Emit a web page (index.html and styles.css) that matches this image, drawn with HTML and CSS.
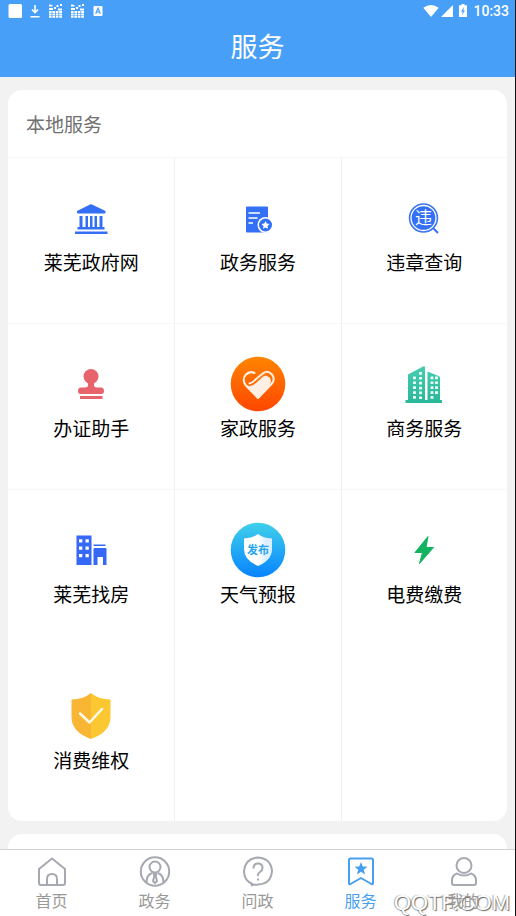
FILE: index.html
```html
<!DOCTYPE html>
<html lang="zh-CN">
<head>
<meta charset="utf-8">
<meta name="viewport" content="width=device-width, initial-scale=1">
<title>服务</title>
<link rel="stylesheet" href="styles.css">
</head>
<body>
<div class="app">
  <header class="header">
    <div class="status">
      <div class="status-group status-left">
        <svg width="14" height="16" viewBox="0 0 14 16"><rect x="0.5" y="1" width="13.5" height="14" rx="1.5" fill="#fff"/></svg>
        <svg width="10" height="16" viewBox="0 0 10 16"><path d="M5 2v7M2 6.500L5 9.500l3-3M0.500 13.800h9" fill="none" stroke="#fff" stroke-width="1.600"/></svg>
        <svg width="14" height="16" viewBox="0 0 14 16"><path id="px" d="M1 1.500h2v2H1zM6 4h2v2H6zM8.500 2h2v2h-2zM12 1h2v2h-2zM1 5h4v2H1zM10 5.500h4v2h-4zM1 8h2.600v2H1zM4.400 8H7v2H4.400zM7.800 8h2.600v2H7.800zM11.200 8H14v2h-2.800zM1 10.600h2.600v1.800H1zM4.400 10.600H7v1.800H4.400zM7.800 10.600h2.600v1.800H7.800zM11.200 10.600H14v1.800h-2.800zM1 13h2.600v1.800H1zM4.400 13H7v1.800H4.400zM7.800 13h2.600v1.800H7.800zM11.200 13H14v1.800h-2.800zM3 2h1.500v1.500H3z" fill="#fff"/></svg>
        <svg width="14" height="16" viewBox="0 0 14 16"><use href="#px"/></svg>
        <svg width="10" height="16" viewBox="0 0 10 16"><rect x="0.500" y="3" width="9" height="10" rx="1" fill="#fff"/><path d="M2.700 10.700L5 5l2.300 5.700M3.500 9h3" fill="none" stroke="#479ff7" stroke-width="1.200"/></svg>
      </div>
      <div class="status-group status-right">
        <svg width="16" height="16" viewBox="0 0 16 16"><path d="M0.300 4.800Q8 -0.600 15.700 4.800L8 14z" fill="#fff"/></svg>
        <svg width="12" height="16" viewBox="0 0 12 16"><path d="M12 2v12H0z" fill="#fff"/></svg>
        <svg class="battery" width="8" height="16" viewBox="0 0 8 16"><path d="M2.500 1h3v1.300H8V14H0V2.300h2.500z" fill="#fff"/><path d="M5 4L2 8.500h1.700L3 12l3-4.400H4.400z" fill="#479ff7"/></svg>
        <span class="time">10:33</span>
      </div>
    </div>
    <h1 class="title">服务</h1>
  </header>

  <main class="content">
    <section class="card">
      <h2 class="card-title">本地服务</h2>
      <div class="grid">
        <a class="cell" href="#">
          <svg class="icon" viewBox="0 0 56 56" fill="#3370f5"><path d="M14 21L27 14.500q1-.5 2 0L42.500 21v1.500q0 1-1 1h-26.500q-1 0-1-1zM16.500 26h3v11h3V26h2.500v11h2V26h2.500v11h2V26H34v11h2.500V26h3v11h2v2.500h-27V37h2zM12 41.500h32.500V44H12z"/></svg>
          <span class="label">莱芜政府网</span>
        </a>
        <a class="cell" href="#">
          <svg class="icon" viewBox="0 0 56 56"><path d="M16 17.500q0-1 1-1h20q1 0 1 1V42.500H17q-1 0-1-1z" fill="#3370f5"/><path d="M18.500 23h11.500M18.500 28h9M18.500 33h4.500" stroke="#fff" stroke-width="1.700"/><circle cx="35.500" cy="35" r="8" fill="#fff"/><circle cx="35.500" cy="35" r="6.500" fill="#3370f5"/><path d="M35.500 31l1.200 2.500 2.800.4-2 2 .5 2.800-2.500-1.300-2.500 1.300.5-2.800-2-2 2.800-.4z" fill="#fff"/></svg>
          <span class="label">政务服务</span>
        </a>
        <a class="cell" href="#">
          <svg class="icon" viewBox="0 0 56 56"><circle cx="27.500" cy="28" r="14" fill="#3370f5" stroke="#3b76ef" stroke-width="1.500"/><circle cx="27.500" cy="28" r="12.500" fill="none" stroke="#fff" stroke-width="1.300"/><path d="M37.500 38.500l4.500 4.500" stroke="#3370f5" stroke-width="2"/><text class="glyph" x="27.500" y="34" font-size="17" fill="#fff">违</text></svg>
          <span class="label">违章查询</span>
        </a>
        <a class="cell" href="#">
          <svg class="icon" viewBox="0 0 56 56" fill="#e7646c"><circle cx="28" cy="20.500" r="7.500"/><path d="M25 25h6v4q0 2.500 3 2.500h4q3 0 3 3.500 0 3-2.500 3h-21Q15 38 15 35q0-3.500 3-3.500h4q3 0 3-2.500z"/><path d="M17 40h22.500v3H17z"/></svg>
          <span class="label">办证助手</span>
        </a>
        <a class="cell" href="#">
          <svg class="icon" viewBox="0 0 56 56"><defs><linearGradient id="orange" x2="0" y2="1"><stop stop-color="#ff8500"/><stop offset="1" stop-color="#ff4600"/></linearGradient></defs><circle cx="28" cy="28" r="27.300" fill="url(#orange)"/><path d="M28 42.500L14.500 29q7 2 11-3l6-6q3-2.500 6.500-.5 4.500 3.500 2 9.500z" fill="#fff0e3"/><path d="M19.500 27.500q3.500-1 5.500-3.500l7-6q5-4.500 9.500 0 4.500 5 0 10L28 42 15.500 29q-3.500-5.500 0-10 4-4.500 9-2" fill="none" stroke="#fff0e3" stroke-width="2" stroke-linecap="round" stroke-linejoin="round"/><path d="M19 29.500q4-.5 7-3.500l6-5.500q4-3 7 0" fill="none" stroke="#ff6a00" stroke-width="1.400" stroke-linecap="round"/></svg>
          <span class="label">家政服务</span>
        </a>
        <a class="cell" href="#">
          <svg class="icon" viewBox="0 0 56 56"><defs><linearGradient id="green" x2="0" y2="1"><stop stop-color="#45cdb0"/><stop offset="1" stop-color="#2bb799"/></linearGradient></defs><path d="M12 18.500L27 10.500q2-.8 2 1V44h2.500V15.500l11 4.500q1.500.7 1.500 2V44H46v3H9.500v-3H12z" fill="url(#green)"/><path d="M18.500 20.500V43M24.500 16V43M36 20.500V43M40.500 20.500V38" fill="none" stroke="#f2fffc" stroke-width="2.800" stroke-dasharray="2.700 2.200"/></svg>
          <span class="label">商务服务</span>
        </a>
        <a class="cell" href="#">
          <svg class="icon" viewBox="0 0 56 56"><path d="M13.500 13.500h15V43h-15zM30.500 27q0-1 1-1h11q1 0 1 1v16H40v-8h-5.500v8h-4zM30.500 22.500h12v1.500h-12z" fill="#3568f6"/><path d="M16 17.200h3.300v3.300H16zM22.500 17.200h3.300v3.300h-3.300zM16 24.500h3.300v3.300H16zM22.500 24.500h3.300v3.300h-3.300zM16 32h3.300v3.300H16zM22.500 32h3.300v3.300h-3.300z" fill="#fff"/></svg>
          <span class="label">莱芜找房</span>
        </a>
        <a class="cell" href="#">
          <svg class="icon" viewBox="0 0 56 56"><defs><linearGradient id="sky" x2="0" y2="1"><stop stop-color="#3fd0ea"/><stop offset="1" stop-color="#0783ff"/></linearGradient><linearGradient id="silver"><stop offset=".5" stop-color="#fff"/><stop offset=".8" stop-color="#dceeff"/></linearGradient></defs><circle cx="28" cy="28" r="27.300" fill="url(#sky)"/><path d="M28 12q5 4 14 4.500V27q0 11-14 17-14-6-14-17V16.500q9-.5 14-4.500z" fill="url(#silver)"/><text class="glyph bold" x="28" y="31.500" font-size="11" fill="#26a5ef">发布</text></svg>
          <span class="label">天气预报</span>
        </a>
        <a class="cell" href="#">
          <svg class="icon" viewBox="0 0 56 56"><path d="M32 14.500L19 30.500h7.500L23.500 41.500l14-16h-7.500z" fill="#12b35f" stroke="#12b35f" stroke-width="1" stroke-linejoin="round"/></svg>
          <span class="label">电费缴费</span>
        </a>
        <a class="cell" href="#">
          <svg class="icon" viewBox="0 0 56 56"><path d="M28 5q7 6 19.500 6.500V29Q47.500 44 28 51z" fill="#fcc832"/><path d="M28 5Q21 11 8.500 11.500V29Q8.500 44 28 51z" fill="#f8b634"/><path d="M17 25.500l9.500 9L39 21" fill="none" stroke="#fffbea" stroke-width="2.500" stroke-linecap="round" stroke-linejoin="round"/></svg>
          <span class="label">消费维权</span>
        </a>
        <div class="cell"></div>
        <div class="cell"></div>
      </div>
    </section>
    <section class="card next-card"></section>
  </main>

  <nav class="tabs">
    <div class="watermark">QQTF.COM</div>
    <a class="tab" href="#"><svg width="32" height="32" viewBox="0 0 32 32"><path d="M3 13L16 2.500 29 13v14q0 2-2 2H5q-2 0-2-2zM11 29v-6q0-5 5-5t5 5v6"/></svg><span>首页</span></a>
    <a class="tab" href="#"><svg width="32" height="32" viewBox="0 0 32 32"><circle cx="16" cy="15.500" r="14.200"/><circle cx="16" cy="11" r="5.500"/><path d="M7.500 26.500q0-7.500 5.500-9.500M24.500 26.500q0-7.500-5.500-9.500M14.500 18h3l-.8 2 1.300 5-2 2-2-2 1.300-5z"/></svg><span>政务</span></a>
    <a class="tab" href="#"><svg width="32" height="32" viewBox="0 0 32 32"><path d="M9 29.500l1.500-1.500Q2 24.500 2 15.500 3 2.500 16 1.500q13 1 14 13.500-1 13-14 13.500-3 0-7 1"/><path d="M11.500 12.500q0-5 4.500-5t4.500 4.500q0 2.500-2.500 4t-2 4M16 22.500v2"/></svg><span>问政</span></a>
    <a class="tab active" href="#" aria-current="page"><svg width="32" height="32" viewBox="0 0 32 32"><path d="M4 4q0-1.500 1.500-1.500h21Q28 2.500 28 4v23q0 2-1.500 1L16 22 5.500 28Q4 29 4 27z"/><path class="solid" d="M16 6l1.800 4.500 4.700.2-3.700 3 1.300 4.800-4.100-2.700-4.100 2.700 1.300-4.800-3.700-3 4.700-.2z"/></svg><span>服务</span></a>
    <a class="tab" href="#"><svg width="32" height="32" viewBox="0 0 32 32"><circle cx="16" cy="9.500" r="7.500"/><path d="M9 17.500q3 2 7 2t7-2q5 1.500 5 7V27q0 2-2 2H6q-2 0-2-2v-2.500q0-5.500 5-7z"/></svg><span>我的</span></a>
  </nav>
</div>
</body>
</html>
```
FILE: styles.css
```css
* { box-sizing: border-box; }

body {
  margin: 0;
  font-family: "Noto Sans CJK SC", sans-serif;
  color: #000;
}

a { color: inherit; text-decoration: none; }

.app {
  display: flex;
  flex-direction: column;
  height: 100vh;
  background: #f2f2f2;
  border-right: 1px solid #111;
}

.header {
  flex: none;
  background: #479ff7;
  color: #fff;
  padding-bottom: 7px;
}

.status {
  display: flex;
  justify-content: space-between;
  align-items: center;
  height: 22px;
  padding: 0 6px 0 8px;
}

.status-group { display: flex; align-items: center; }
.status-left { gap: 8px; }
.status-left svg:last-child { margin-left: 1px; }
.status-right { gap: 2px; }
.battery { margin: 0 4px; }

.time {
  font: 500 14px/22px Roboto, sans-serif;
}

.title {
  margin: 0;
  font-size: 27px;
  font-weight: 400;
  line-height: 48px;
  text-align: center;
}

.content {
  flex: 1;
  min-height: 0;
  display: flex;
  flex-direction: column;
  gap: 13px;
  padding: 13px 8px 0;
  overflow: auto;
  scrollbar-width: none;
}

.card {
  flex: none;
  background: #fff;
  border-radius: 14px;
  overflow: hidden;
}

.next-card { height: 120px; }

.card-title {
  margin: 0;
  padding: 1px 18px 0;
  font-size: 19px;
  font-weight: 400;
  line-height: 66px;
  color: #707070;
}

.grid {
  display: grid;
  grid-template-columns: repeat(3, 1fr);
}

.cell {
  display: flex;
  flex-direction: column;
  align-items: center;
  height: 166px;
  padding-top: 32px;
  border-top: 1px solid #f7f7f7;
  border-left: 1px solid #f0f0f0;
}

.cell:nth-child(3n + 1) { border-left: 0; }
.cell:nth-child(n + 10) { border-top-color: #fff; }

.icon { width: 56px; height: 56px; }

.glyph {
  font-family: "Noto Sans CJK SC", sans-serif;
  text-anchor: middle;
}

.bold { font-weight: 700; }

.label {
  font-size: 19px;
  line-height: 32px;
}

.tabs {
  position: relative;
  flex: none;
  display: flex;
  height: 67px;
  padding-top: 6px;
  background: #fff;
  border-top: 1px solid #d2d2d4;
}

.tab {
  position: relative;
  flex: 1;
  display: flex;
  flex-direction: column;
  align-items: center;
  font-size: 16px;
  line-height: 24px;
  color: #999;
}

.tab svg {
  fill: none;
  stroke: #a7a9b2;
  stroke-width: 2;
  stroke-linejoin: round;
}

.tab.active { color: #479ff0; }
.tab.active svg { stroke: #479ff0; }
.tab .solid { fill: #479ff0; stroke: none; }

.watermark {
  position: absolute;
  right: 5px;
  bottom: 0;
  font: 22px/26px "Liberation Sans", sans-serif;
  color: #fff;
  text-shadow: 1px 1px 1px #666, -1px 0 1px #aaa;
  pointer-events: none;
}
```
